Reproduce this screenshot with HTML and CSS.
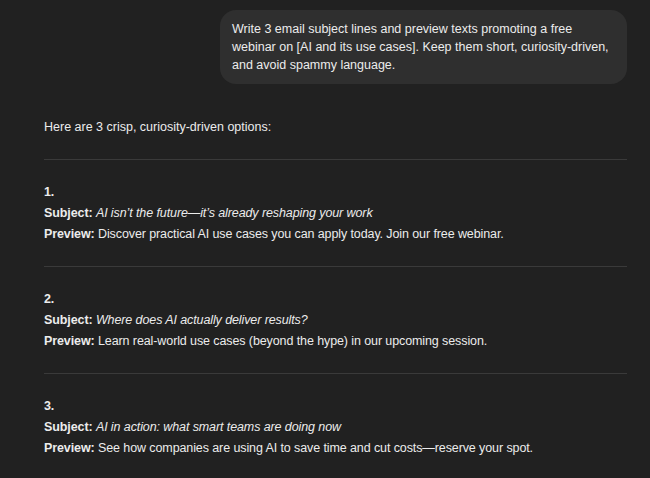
FILE: index.html
```html
<!DOCTYPE html>
<html lang="en">
<head>
<meta charset="utf-8">
<title>Chat</title>
<link rel="stylesheet" href="styles.css">
</head>
<body>
<main class="chat">
  <div class="user-row">
    <div class="bubble">Write 3 email subject lines and preview texts promoting a free webinar on [AI and its use cases]. Keep them short, curiosity-driven, and avoid spammy language.</div>
  </div>
  <div class="answer">
    <p class="intro">Here are 3 crisp, curiosity-driven options:</p>
    <hr class="divider">
    <section class="option">
      <p class="num">1.</p>
      <p><strong>Subject:</strong> <em>AI isn’t the future—it’s already reshaping your work</em></p>
      <p><strong>Preview:</strong> Discover practical AI use cases you can apply today. Join our free webinar.</p>
    </section>
    <hr class="divider">
    <section class="option">
      <p class="num">2.</p>
      <p><strong>Subject:</strong> <em>Where does AI actually deliver results?</em></p>
      <p><strong>Preview:</strong> Learn real-world use cases (beyond the hype) in our upcoming session.</p>
    </section>
    <hr class="divider">
    <section class="option">
      <p class="num">3.</p>
      <p><strong>Subject:</strong> <em>AI in action: what smart teams are doing now</em></p>
      <p><strong>Preview:</strong> See how companies are using AI to save time and cut costs—reserve your spot.</p>
    </section>
  </div>
</main>
</body>
</html>
```
FILE: styles.css
```css
html, body {
  margin: 0;
  padding: 0;
  background: #212121;
}
body {
  width: 650px;
  height: 478px;
  overflow: hidden;
  color: #ececec;
  font-family: "Liberation Sans", Arial, sans-serif;
  font-size: 12.5px;
}
.chat {
  padding: 10px 23px 0 44px;
}
.user-row {
  display: flex;
  justify-content: flex-end;
}
.bubble {
  box-sizing: border-box;
  width: 407px;
  padding: 10px 18px 10px 12px;
  background: #2f2f2f;
  border-radius: 16px;
  line-height: 18px;
}
.answer {
  margin-top: 33px;
}
.answer p {
  margin: 0;
  line-height: 21px;
}
.intro {
  margin-bottom: 21px !important;
}
.divider {
  border: 0;
  height: 1px;
  background: #3a3a3a;
  margin: 0;
}
.option {
  padding: 22px 0 21px;
  letter-spacing: -0.1px;
}
.num {
  font-weight: bold;
}
strong {
  font-weight: bold;
}
em {
  font-style: italic;
}
```
